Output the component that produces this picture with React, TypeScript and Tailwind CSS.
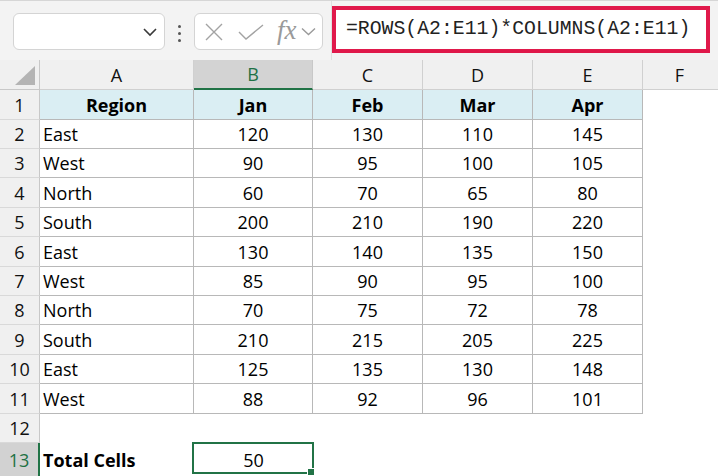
import React from "react";

const data: [string, number, number, number, number][] = [
  ["East", 120, 130, 110, 145],
  ["West", 90, 95, 100, 105],
  ["North", 60, 70, 65, 80],
  ["South", 200, 210, 190, 220],
  ["East", 130, 140, 135, 150],
  ["West", 85, 90, 95, 100],
  ["North", 70, 75, 72, 78],
  ["South", 210, 215, 205, 225],
  ["East", 125, 135, 130, 148],
  ["West", 88, 92, 96, 101],
];

const H = [
  "h-[30px]",
  "h-[29px]",
  "h-[29px]",
  "h-[30px]",
  "h-[29px]",
  "h-[30px]",
  "h-[29px]",
  "h-[29px]",
  "h-[30px]",
  "h-[29px]",
  "h-[30px]",
  "h-[29px]",
  "h-[33px]",
];

const colW = ["w-[154px]", "w-[119px]", "w-[110px]", "w-[110px]", "w-[110px]"];

function RowHeader({ n, selected }: { n: number; selected?: boolean }) {
  return (
    <div
      className={
        selected
          ? "w-[40px] shrink-0 flex items-center justify-center pt-[1px] bg-[#d2d2d2] text-[#1e7145] border-r-2 border-r-[#217346] text-[18px]"
          : "w-[40px] shrink-0 flex items-center justify-center pt-[1px] bg-[#f0f0f0] text-[#111] border-r border-r-[#c8c8c8] border-b border-b-[#d9d9d9] text-[18px]"
      }
    >
      {n}
    </div>
  );
}

function DataCell({
  w,
  children,
  left,
  bold,
  head,
}: {
  w: string;
  children: React.ReactNode;
  left?: boolean;
  bold?: boolean;
  head?: boolean;
}) {
  return (
    <div
      className={[
        w,
        "shrink-0 flex items-center pt-[1px] border-r border-b border-[#b8b8b8] text-[18px] text-[#000]",
        left ? "justify-start pl-[3px]" : "justify-center",
        bold ? "font-bold" : "",
        head ? "bg-[#daeef3]" : "bg-white",
      ].join(" ")}
    >
      {children}
    </div>
  );
}

export default function App() {
  return (
    <div className="w-[718px] h-[476px] overflow-hidden bg-white relative font-['Open_Sans',sans-serif]">
      {/* Toolbar */}
      <div className="h-[60px] bg-[#f3f3f3] border-t border-t-[#d6d6d6] flex items-start relative">
        <div className="ml-[13px] mt-[12px] w-[152px] h-[37px] bg-white border border-[#d4d4d4] rounded-[6px] flex items-center justify-end pr-[6px]">
          <svg width="16" height="10" viewBox="0 0 16 10">
            <path d="M2 2 L8 8 L14 2" fill="none" stroke="#3a3a3a" strokeWidth="1.6" />
          </svg>
        </div>
        <div className="w-[29px] h-[60px] flex flex-col items-center pt-[24px] gap-[4px]">
          <div className="w-[3px] h-[3px] rounded-full bg-[#555]" />
          <div className="w-[3px] h-[3px] rounded-full bg-[#555]" />
          <div className="w-[3px] h-[3px] rounded-full bg-[#555]" />
        </div>
        <div className="mt-[12px] w-[129px] h-[37px] bg-white border border-[#d4d4d4] rounded-[6px] flex items-center pl-[10px]">
          <svg width="18" height="18" viewBox="0 0 18 18">
            <path d="M1 1 L17 17 M17 1 L1 17" stroke="#a3a3a3" strokeWidth="1.4" fill="none" />
          </svg>
          <svg width="26" height="16" viewBox="0 0 26 16" className="ml-[15px]">
            <path d="M1 8 L8 15 L25 1" stroke="#a3a3a3" strokeWidth="1.4" fill="none" />
          </svg>
          <span className="ml-[13px] font-['Liberation_Serif',serif] italic text-[27px] leading-none text-[#9a9a9a] -mt-[3px]">
            fx
          </span>
          <svg width="15" height="9" viewBox="0 0 15 9" className="ml-[4px]">
            <path d="M1 1.5 L7.5 7.5 L14 1.5" fill="none" stroke="#9a9a9a" strokeWidth="1.4" />
          </svg>
        </div>
        <div className="ml-[8px] w-px h-[59px] bg-[#e0e0e0]" />
        <div className="mt-[5px] w-[378px] h-[47px] bg-white border-4 border-[#e0194b] flex items-center pl-[10px]">
          <span className="font-['Liberation_Mono',monospace] text-[19.8px] text-[#222] whitespace-nowrap leading-none">
            =ROWS(A2:E11)*COLUMNS(A2:E11)
          </span>
        </div>
      </div>

      {/* Column headers */}
      <div className="flex h-[30px] text-[18px] text-[#111]">
        <div className="w-[40px] shrink-0 bg-[#f0f0f0] border-r border-b border-[#c8c8c8] flex items-end justify-end pr-[4px] pb-[4px]">
          <svg width="20" height="19" viewBox="0 0 20 19">
            <path d="M20 0 L20 19 L0 19 Z" fill="#b4b4b4" />
          </svg>
        </div>
        {["A", "B", "C", "D", "E"].map((c, i) => (
          <div
            key={c}
            className={
              c === "B"
                ? `${colW[i]} shrink-0 bg-[#d3d3d3] border-r border-r-[#c8c8c8] border-b-2 border-b-[#217346] text-[#1e7145] flex items-center justify-center pt-[1px]`
                : `${colW[i]} shrink-0 bg-[#f0f0f0] border-r border-b border-[#d0d0d0] flex items-center justify-center pt-[1px]`
            }
          >
            {c}
          </div>
        ))}
        <div className="flex-1 bg-[#f0f0f0] border-b border-[#d0d0d0] flex items-center justify-center pt-[1px]">
          <span className="-ml-[2px]">F</span>
        </div>
      </div>

      {/* Row 1: header */}
      <div className={`flex ${H[0]}`}>
        <RowHeader n={1} />
        <DataCell w={colW[0]} bold head>
          Region
        </DataCell>
        {["Jan", "Feb", "Mar", "Apr"].map((m, i) => (
          <DataCell key={m} w={colW[i + 1]} bold head>
            {m}
          </DataCell>
        ))}
        <div className="flex-1" />
      </div>

      {data.map((r, ri) => (
        <div key={ri} className={`flex ${H[ri + 1]}`}>
          <RowHeader n={ri + 2} />
          <DataCell w={colW[0]} left>
            {r[0]}
          </DataCell>
          {r.slice(1).map((v, i) => (
            <DataCell key={i} w={colW[i + 1]}>
              {v}
            </DataCell>
          ))}
          <div className="flex-1" />
        </div>
      ))}

      {/* Row 12 */}
      <div className={`flex ${H[11]}`}>
        <RowHeader n={12} />
        <div className="flex-1" />
      </div>

      {/* Row 13 */}
      <div className={`flex ${H[12]}`}>
        <RowHeader n={13} selected />
        <div className="w-[154px] shrink-0 flex items-center pl-[3px] pt-[1px] font-bold text-[18px] text-[#000]">
          Total Cells
        </div>
        <div className="w-[119px] shrink-0 relative flex items-center justify-center pt-[1px] text-[18px] text-[#000]">
          50
          <div className="absolute left-[-2px] top-[-1px] w-[122px] h-[32px] border-2 border-[#217346]" />
          <div className="absolute left-[113px] top-[25px] w-[8px] h-[8px] bg-[#217346] border border-white" />
        </div>
        <div className="flex-1" />
      </div>
    </div>
  );
}
